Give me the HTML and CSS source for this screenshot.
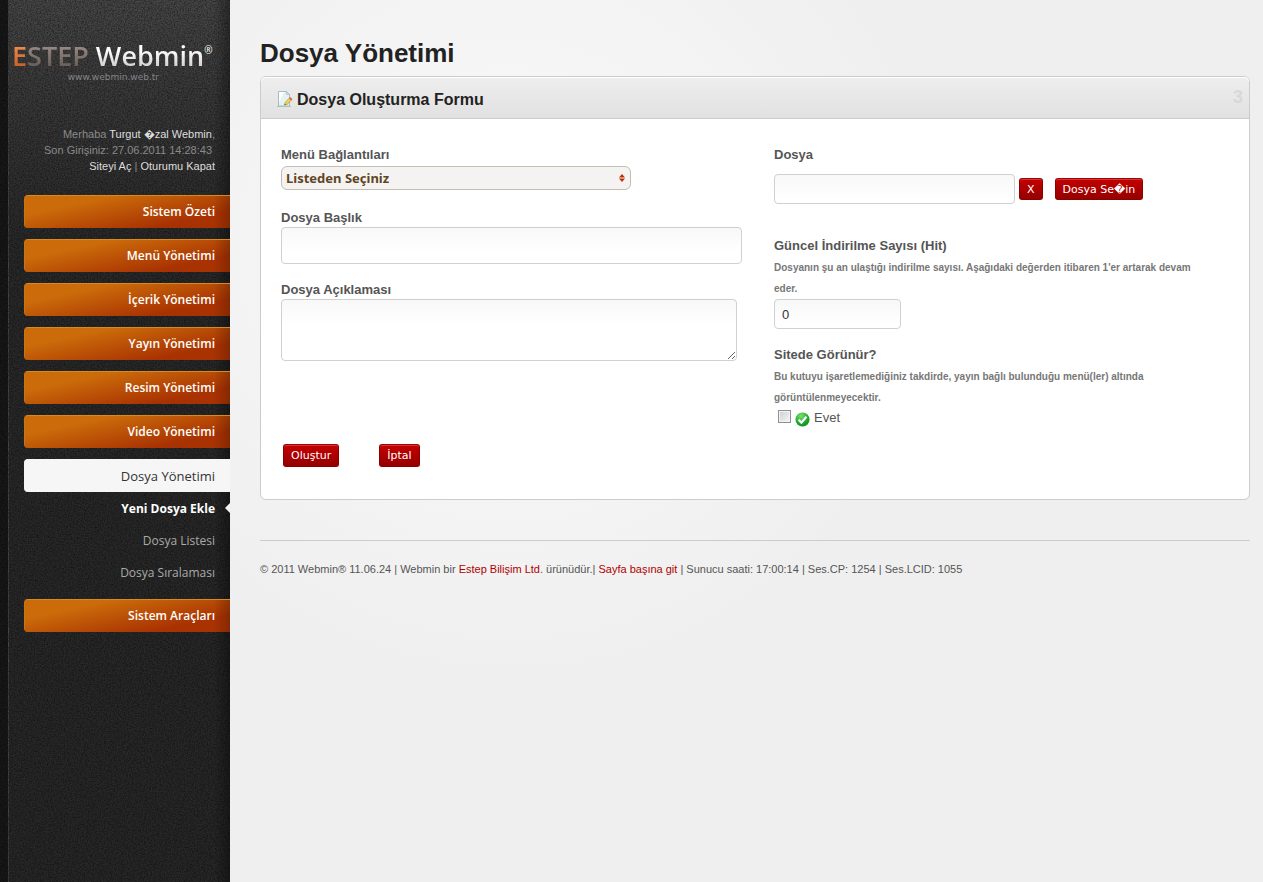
FILE: index.html
```html
<!DOCTYPE html>
<html lang="tr">
<head>
<meta charset="utf-8">
<title>Dosya Yönetimi</title>
<link rel="stylesheet" href="styles.css">
</head>
<body>
<div class="layout" id="top">
  <aside class="sidebar">
    <svg class="grain" aria-hidden="true" width="100%" height="100%">
      <filter id="noise"><feTurbulence type="fractalNoise" baseFrequency="0.7" numOctaves="3" seed="4"/><feColorMatrix values="0 0 0 0 0  0 0 0 0 0  0 0 0 0 0  .9 0 0 0 -.28"/></filter>
      <rect width="100%" height="100%" filter="url(#noise)"/>
    </svg>
    <a class="logo" href="#">
      <span class="logo-name"><span class="logo-e">E</span><span class="logo-step">STEP</span> <span class="logo-product">Webmin</span><span class="logo-mark">®</span></span>
      <span class="logo-url">www.webmin.web.tr</span>
    </a>
    <div class="profile">
      <p>Merhaba <a href="#">Turgut &#xFFFD;zal Webmin</a>,</p>
      <p class="last-login">Son Girişiniz: 27.06.2011 14:28:43</p>
      <p><a href="#">Siteyi Aç</a> | <a href="#">Oturumu Kapat</a></p>
    </div>
    <nav class="menu">
      <a class="menu-item" href="#">Sistem Özeti</a>
      <a class="menu-item" href="#">Menü Yönetimi</a>
      <a class="menu-item" href="#">İçerik Yönetimi</a>
      <a class="menu-item" href="#">Yayın Yönetimi</a>
      <a class="menu-item" href="#">Resim Yönetimi</a>
      <a class="menu-item" href="#">Video Yönetimi</a>
      <div class="menu-group">
        <a class="menu-item is-current" href="#">Dosya Yönetimi</a>
        <a class="sub-item is-current" href="#">Yeni Dosya Ekle</a>
        <a class="sub-item" href="#">Dosya Listesi</a>
        <a class="sub-item" href="#">Dosya Sıralaması</a>
      </div>
      <a class="menu-item" href="#">Sistem Araçları</a>
    </nav>
  </aside>

  <main class="content">
    <h1>Dosya Yönetimi</h1>
    <section class="panel">
      <header class="panel-header">
        <svg class="form-icon" viewBox="0 0 16 16" aria-hidden="true">
          <path d="M0 15.500h14" stroke="#b9c2c2" stroke-width="1"/>
          <path d="M1.500.5h8l3 3v11.500h-11z" fill="#e3f2f3" stroke="#a9bcc0"/>
          <path d="M2 1h5L2 12z" fill="#fff"/>
          <path d="M9.500.5v3h3z" fill="#cfdde0" stroke="#a9bcc0" stroke-width=".7"/>
          <path d="M7.500 14l.8-2.800 4.700-4.700 2 2-4.700 4.700z" fill="#f4d34c" stroke="#a5853a" stroke-width=".6"/>
          <path d="M12.100 7.400l1.200-1.200 2 2-1.200 1.200z" fill="#e4594f"/>
          <path d="M7.500 14l.4-1.300.9.900z" fill="#333"/>
        </svg>
        <h2>Dosya Oluşturma Formu</h2>
        <span class="panel-count">3</span>
      </header>
      <form class="panel-body">
        <div class="column">
          <div class="field">
            <label for="menu">Menü Bağlantıları</label>
            <div class="select-box">
              <select id="menu"><option>Listeden Seçiniz</option></select>
              <svg viewBox="0 0 6 8" aria-hidden="true"><path d="M3 0l3 3.500H0zM3 8L0 4.500h6z" fill="#b83000"/></svg>
            </div>
          </div>
          <div class="field">
            <label for="title">Dosya Başlık</label>
            <input class="text tall" id="title" type="text">
          </div>
          <div class="field">
            <label for="desc">Dosya Açıklaması</label>
            <textarea class="text" id="desc"></textarea>
          </div>
          <div class="actions">
            <button class="button" type="button">Oluştur</button>
            <button class="button" type="button">İptal</button>
          </div>
        </div>
        <div class="column">
          <div class="field file">
            <label for="file">Dosya</label>
            <div class="file-row">
              <input class="text" id="file" type="text">
              <button class="button" type="button">X</button>
              <button class="button pick" type="button">Dosya Se&#xFFFD;in</button>
            </div>
          </div>
          <div class="field">
            <label for="hits">Güncel İndirilme Sayısı (Hit)</label>
            <p class="hint">Dosyanın şu an ulaştığı indirilme sayısı. Aşağıdaki değerden itibaren 1'er artarak devam eder.</p>
            <input class="text hits" id="hits" type="text" value="0">
          </div>
          <div class="field">
            <p class="label">Sitede Görünür?</p>
            <p class="hint">Bu kutuyu işaretlemediğiniz takdirde, yayın bağlı bulunduğu menü(ler) altında görüntülenmeyecektir.</p>
            <label class="check">
              <input type="checkbox">
              <svg viewBox="0 0 16 16" aria-hidden="true">
                <defs><radialGradient id="ok" cx=".4" cy=".25" r=".8"><stop offset="0" stop-color="#7ae070"/><stop offset=".6" stop-color="#22ac2c"/><stop offset="1" stop-color="#0b8a1c"/></radialGradient></defs>
                <circle cx="8" cy="8" r="7.500" fill="url(#ok)"/>
                <path d="M3.800 8.300l3 3 5.400-6.300" fill="none" stroke="#fff" stroke-width="2.300"/>
              </svg>
              Evet
            </label>
          </div>
        </div>
      </form>
    </section>
    <footer class="footer">© 2011 Webmin® 11.06.24 | Webmin bir <a href="#">Estep Bilişim Ltd</a>. ürünüdür.| <a href="#top">Sayfa başına git</a> | Sunucu saati: 17:00:14 | Ses.CP: 1254 | Ses.LCID: 1055</footer>
  </main>
</div>
</body>
</html>
```
FILE: styles.css
```css
* { box-sizing: border-box; }

body {
  margin: 0;
  background: #efefef;
  color: #555;
  font: 13px/20px "Liberation Sans", Arial, sans-serif;
}

h1, h2, p { margin: 0; }
a { text-decoration: none; }

.layout {
  display: grid;
  grid-template-columns: 230px 1fr;
  min-height: 100vh;
}

/* Sidebar */
.sidebar {
  position: relative;
  isolation: isolate;
  padding: 40px 0 24px 24px;
  background:
    linear-gradient(to right, #181818 8px, #444 8px, #444 9px, transparent 9px),
    linear-gradient(to left, rgba(0, 0, 0, .35), transparent 16px),
    linear-gradient(#484848, #3a3a3a 100px, #2a2a2a 240px, #282828);
}

.grain {
  position: absolute;
  inset: 0;
  z-index: -1;
}

.logo {
  display: block;
  height: 78px;
  margin-left: -12px;
  font-family: "Open Sans", "Noto Sans", sans-serif;
}

.logo-name {
  display: block;
  font-size: 27px;
  line-height: 32px;
  white-space: nowrap;
}

.logo-e, .logo-step, .logo-product {
  color: transparent;
  background-clip: text;
  -webkit-background-clip: text;
}

.logo-e, .logo-step, .logo-product { font-weight: 600; }
.logo-e { background-image: linear-gradient(#f08a4c 25%, #c9602a 80%); }
.logo-step { background-image: linear-gradient(#978a84 25%, #6a5d57 80%); }
.logo-product { background-image: linear-gradient(#fff 35%, #ccc 85%); }
.logo-mark { color: #fff; font-size: 10px; vertical-align: 12px; line-height: 1; }

.logo-url {
  display: block;
  padding-right: 71px;
  color: #858585;
  font: 9px/10px "DejaVu Sans", sans-serif;
  text-align: right;
}

.profile {
  padding: 8px 15px 21px 0;
  color: #8a8a8a;
  font-size: 11px;
  line-height: 16px;
  text-align: right;
}

.profile a { color: #ddd; }
.last-login { padding-right: 3px; }

.menu, .menu-group { display: flex; flex-direction: column; }
.menu { gap: 11px; }

.menu-item, .sub-item {
  padding-right: 15px;
  font: 600 12px/32px "Open Sans", "Noto Sans", sans-serif;
  text-align: right;
}

.menu-item {
  height: 33px;
  border-top: 1px solid #d98a1c;
  border-left: 1px solid #c87513;
  border-radius: 4px 0 0 4px;
  background:
    linear-gradient(to left, rgba(70, 20, 0, .35), transparent 16px),
    linear-gradient(168deg, #cb6b0a 25%, #a83202 78%);
  color: #fff;
}

.menu-item.is-current {
  border-color: #f6f6f6;
  background: #f6f6f6;
  color: #333;
  font-size: 13px;
  font-weight: 400;
}

.sub-item { position: relative; color: #aaa; font-weight: 400; line-height: 33px; height: 32px; }
.sub-item.is-current { color: #fff; font-weight: 700; }

.sub-item.is-current::after {
  content: "";
  position: absolute;
  top: 11px;
  right: 0;
  border: 5px solid transparent;
  border-right-color: #f3f3f3;
  border-left-width: 0;
}

/* Content */
.content {
  padding: 36px 13px 36px 30px;
  background: radial-gradient(circle at 280px 250px, #fafafa, #efefef 430px);
}

h1 {
  height: 40px;
  color: #222;
  font-size: 26px;
  line-height: 34px;
}

.panel {
  border: 1px solid #ccc;
  border-radius: 6px;
  background: #fff;
}

.panel-header {
  display: flex;
  align-items: center;
  height: 42px;
  padding: 4px 6px 0 16px;
  border-bottom: 1px solid #ccc;
  border-radius: 5px 5px 0 0;
  box-shadow: inset 0 1px #fff;
  background: linear-gradient(#eee, #e1e1e1);
}

.form-icon { width: 16px; height: 16px; margin: 0 4px 2px 0; }
h2 { color: #222; font-size: 16px; line-height: 20px; }
.panel-count { margin: 0 0 5px auto; color: #d8d8d8; font: bold 18px/20px "Liberation Sans", sans-serif; }

.panel-body {
  display: grid;
  grid-template-columns: 461fr 455fr;
  gap: 32px;
  padding: 25px 20px 32px;
}

.field { margin-bottom: 15px; }

.field > label:first-child, .label {
  display: block;
  padding-top: 2px;
  font-weight: bold;
  line-height: 18px;
}

.text {
  display: block;
  height: 30px;
  padding: 0 7px;
  border: 1px solid #d0d0d0;
  border-radius: 4px;
  background: linear-gradient(#f8f8f8, #fff 24px);
  color: #333;
  font: 13px/20px "Liberation Sans", Arial, sans-serif;
}

.text.tall { width: 100%; height: 37px; }
.text.hits { width: 127px; }
textarea.text { width: 99%; height: 62px; padding: 6px 8px; }

.select-box { position: relative; width: 350px; max-width: 100%; padding: 2px 0; }

.select-box select {
  display: block;
  width: 100%;
  height: 24px;
  padding: 0 20px 0 4px;
  border: 1px solid #c3bdb3;
  border-radius: 6px;
  appearance: none;
  background: #f5f3f1;
  color: #5f4526;
  font: bold 13px/20px "Noto Sans", sans-serif;
}

.select-box svg {
  position: absolute;
  top: 10px;
  right: 6px;
  width: 6px;
  height: 8px;
  pointer-events: none;
}

.actions { display: flex; gap: 40px; padding: 68px 2px 0; }

.button {
  height: 22px;
  padding: 1px 7px 0;
  border: 1px solid #8c0000;
  border-top-color: #a00;
  border-radius: 3px;
  box-shadow: inset 0 1px #c93a3a;
  background: linear-gradient(#c40000, #950000);
  color: #fff;
  font: 11px/18px "DejaVu Sans", Verdana, sans-serif;
}

.actions .button { height: 23px; }

.file { margin-bottom: 31px; }
.file-row { display: flex; align-items: center; gap: 4px; padding-top: 10px; }
.file-row .text { width: 241px; min-width: 0; }
.file-row .pick { margin-left: 8px; }

.hint {
  padding: 2px 16px 0 0;
  color: #777;
  font-size: 10px;
  font-weight: bold;
  line-height: 21px;
}

.check { display: flex; align-items: center; padding-left: 4px; }

.check input {
  width: 13px;
  height: 13px;
  margin: 0 4px 3px 0;
  appearance: none;
  border: 1px solid #8e8f8f;
  box-shadow: inset 0 0 0 1px #f4f4f4;
  background: linear-gradient(135deg, #cbcfd5, #f6f6f6);
}

.check svg { width: 15px; height: 15px; margin: 3px 4px 0 0; }

.footer {
  margin-top: 40px;
  padding-top: 18px;
  border-top: 1px solid #ccc;
  font-size: 11px;
}

.footer a { color: #b00000; }
```
